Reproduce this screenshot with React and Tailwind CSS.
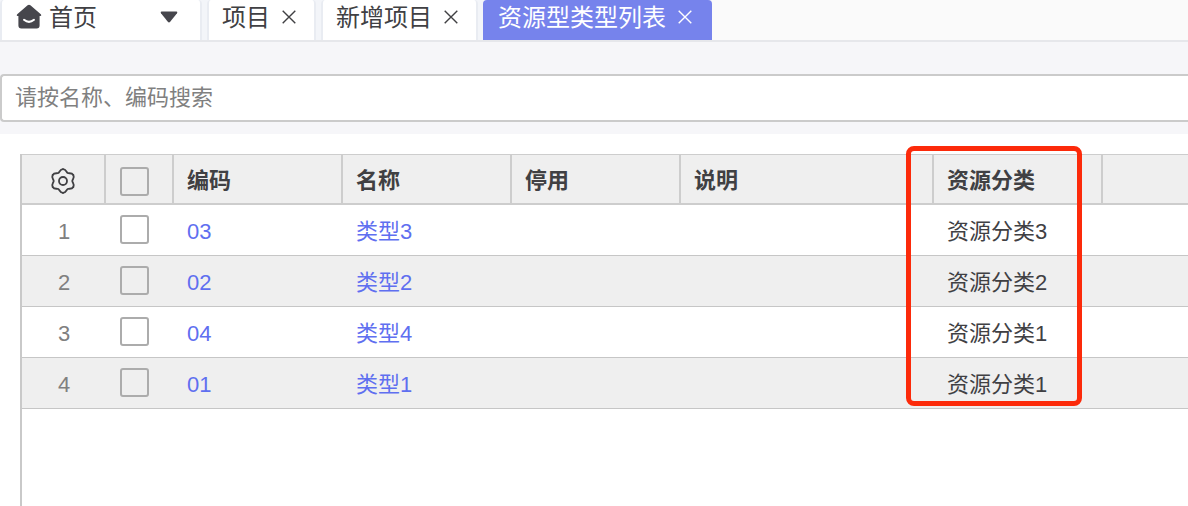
import React, { useState } from "react";

const openTabs = [
  { id: "project", title: "项目" },
  { id: "new-project", title: "新增项目" },
  { id: "resource-types", title: "资源型类型列表" },
];

const rows = [
  { code: "03", name: "类型3", category: "资源分类3" },
  { code: "02", name: "类型2", category: "资源分类2" },
  { code: "04", name: "类型4", category: "资源分类1" },
  { code: "01", name: "类型1", category: "资源分类1" },
];

const HomeIcon = () => (
  <svg viewBox="0 0 26 26" className="size-[26px]" aria-hidden="true">
    <path
      d="M11.6 1.3Q13 .2 14.4 1.3L24.8 10.2Q26 11.4 24.6 12H23.6V21.6Q23.6 24.6 20.6 24.6H5.4Q2.4 24.6 2.4 21.6V12H1.4Q0 11.4 1.2 10.2Z"
      fill="#46464c"
    />
    <path d="M8 15.8Q13 20 18 15.8" fill="none" stroke="#fff" strokeWidth="2" strokeLinecap="round" />
  </svg>
);

const CaretIcon = () => (
  <svg viewBox="0 0 18 12" className="h-3 w-[18px]" aria-hidden="true">
    <path d="M1.5.5H16.5Q18 .8 17 2.2L10.2 10.8Q9 12 7.8 10.8L1 2.2Q0 .8 1.5.5Z" fill="#46464c" />
  </svg>
);

const CloseIcon = () => (
  <svg viewBox="0 0 14 14" className="size-3.5" fill="none" stroke="currentColor" strokeWidth="1.4" aria-hidden="true">
    <path d="M.7.7 13.3 13.3M13.3.7.7 13.3" />
  </svg>
);

const GearIcon = () => (
  <svg viewBox="-13 -13 26 26" className="size-[26px]" fill="none" stroke="#404043" strokeWidth="1.8" strokeLinecap="round" aria-hidden="true">
    {[0, 60, 120, 180, 240, 300].map((angle) => (
      <path
        key={angle}
        d="M0-11.9C3.2-11.9 3.2-8.9 4.65-8.05C6.1-7.2 8.7-8.7 10.3-5.95"
        transform={`rotate(${angle})`}
      />
    ))}
    <circle r="4" />
  </svg>
);

const Checkbox = ({ label, checked, onChange }) => (
  <input
    type="checkbox"
    aria-label={label}
    checked={checked}
    onChange={onChange}
    className="block size-[29px] appearance-none rounded-[3px] border-2 border-[#acacac] checked:bg-[#7683ec]"
  />
);

const App = () => {
  const [activeTab, setActiveTab] = useState("resource-types");
  const [keyword, setKeyword] = useState("");
  const [selected, setSelected] = useState([]);

  const toggleRow = (code) => {
    setSelected((prev) => (prev.includes(code) ? prev.filter((c) => c !== code) : [...prev, code]));
  };

  const toggleAll = () => {
    setSelected(selected.length === rows.length ? [] : rows.map((r) => r.code));
  };

  const headCell = "border-r-2 border-b-2 border-[#cdcdcd] pl-[13px] pt-1 text-left font-bold";
  const bodyCell = "border-b border-[#c6c6c6] pl-[13px] pt-1";

  return (
    <div className="flex min-h-screen flex-col overflow-hidden bg-white font-['Liberation_Sans','Noto_Sans_CJK_SC',sans-serif] text-[22px] leading-8 text-[#404043]">
      <nav className="flex h-[42px] border-b-2 border-[#e6e7eb] bg-[#fafafa] text-2xl leading-8">
        <div className="flex gap-[5px] bg-[#f3f5f9]">
          <div className="flex w-[202px] items-center justify-between rounded-t border-x-2 border-[#e9ecf2] bg-white pr-[22px] pb-1.5 pl-3.5">
            <button type="button" className="flex items-center gap-[7px]">
              <HomeIcon />
              <span className="pt-0.5">首页</span>
            </button>
            <button type="button" aria-label="展开">
              <CaretIcon />
            </button>
          </div>
          {openTabs.map((tab) => (
            <div
              key={tab.id}
              className={
                tab.id === activeTab
                  ? "flex items-center gap-3 rounded-t bg-[#7683ec] pr-5 pb-1.5 pl-[15px] text-white"
                  : "flex items-center gap-3 rounded-t border-x-2 border-[#e9ecf2] bg-white pr-[18px] pb-1.5 pl-[13px]"
              }
            >
              <button type="button" className="pt-0.5" onClick={() => setActiveTab(tab.id)}>
                {tab.title}
              </button>
              <button type="button" aria-label="关闭">
                <CloseIcon />
              </button>
            </div>
          ))}
        </div>
      </nav>

      <div className="bg-[#f6f6f9] pt-8 pb-3">
        <input
          type="text"
          aria-label="搜索"
          placeholder="请按名称、编码搜索"
          value={keyword}
          onChange={(e) => setKeyword(e.target.value)}
          className="block h-12 w-full rounded-l-[4px] border-2 border-r-0 border-[#cbcbcb] bg-white px-[13px] placeholder:text-[#808080] focus:outline-none"
        />
      </div>

      <main className="flex flex-1 pt-5 pl-5">
        <div className="relative flex-1 border-l-2 border-[#c9c9c9]">
          <table className="w-full table-fixed border-separate border-spacing-0">
            <colgroup>
              <col className="w-[84px]" />
              <col className="w-[68px]" />
              <col className="w-[169px]" />
              <col className="w-[169px]" />
              <col className="w-[169px]" />
              <col className="w-[253px]" />
              <col className="w-[169px]" />
              <col />
            </colgroup>
            <thead>
              <tr className="h-[51px] bg-[#efefef] [&>th]:border-t">
                <th className="border-r-2 border-b-2 border-[#cdcdcd] pt-1">
                  <button type="button" aria-label="设置" className="mx-auto block">
                    <GearIcon />
                  </button>
                </th>
                <th className="border-r-2 border-b-2 border-[#cdcdcd] pt-1 pl-3.5">
                  <Checkbox label="全选" checked={selected.length === rows.length} onChange={toggleAll} />
                </th>
                <th className={headCell}>编码</th>
                <th className={headCell}>名称</th>
                <th className={headCell}>停用</th>
                <th className={headCell}>说明</th>
                <th className={headCell}>资源分类</th>
                <th className="border-b-2 border-[#cdcdcd]"></th>
              </tr>
            </thead>
            <tbody>
              {rows.map((row, i) => (
                <tr key={row.code} className="h-[51px] even:bg-[#efefef]">
                  <td className="border-b border-[#c6c6c6] pt-1 text-center text-[#808080]">{i + 1}</td>
                  <td className="border-b border-[#c6c6c6] pb-0.5 pl-3.5">
                    <Checkbox
                      label={row.name}
                      checked={selected.includes(row.code)}
                      onChange={() => toggleRow(row.code)}
                    />
                  </td>
                  <td className={bodyCell}>
                    <a href="#" className="text-[#5f6ff0]">{row.code}</a>
                  </td>
                  <td className={bodyCell}>
                    <a href="#" className="text-[#5f6ff0]">{row.name}</a>
                  </td>
                  <td className={bodyCell}></td>
                  <td className={bodyCell}></td>
                  <td className={bodyCell}>{row.category}</td>
                  <td className={bodyCell}></td>
                </tr>
              ))}
            </tbody>
          </table>

          {/* highlight around the category column */}
          <div className="pointer-events-none absolute -top-2 left-[884px] h-[260px] w-[176px] rounded-lg border-[5px] border-[#fc2a0a]"></div>
        </div>
      </main>
    </div>
  );
};

export default App;
